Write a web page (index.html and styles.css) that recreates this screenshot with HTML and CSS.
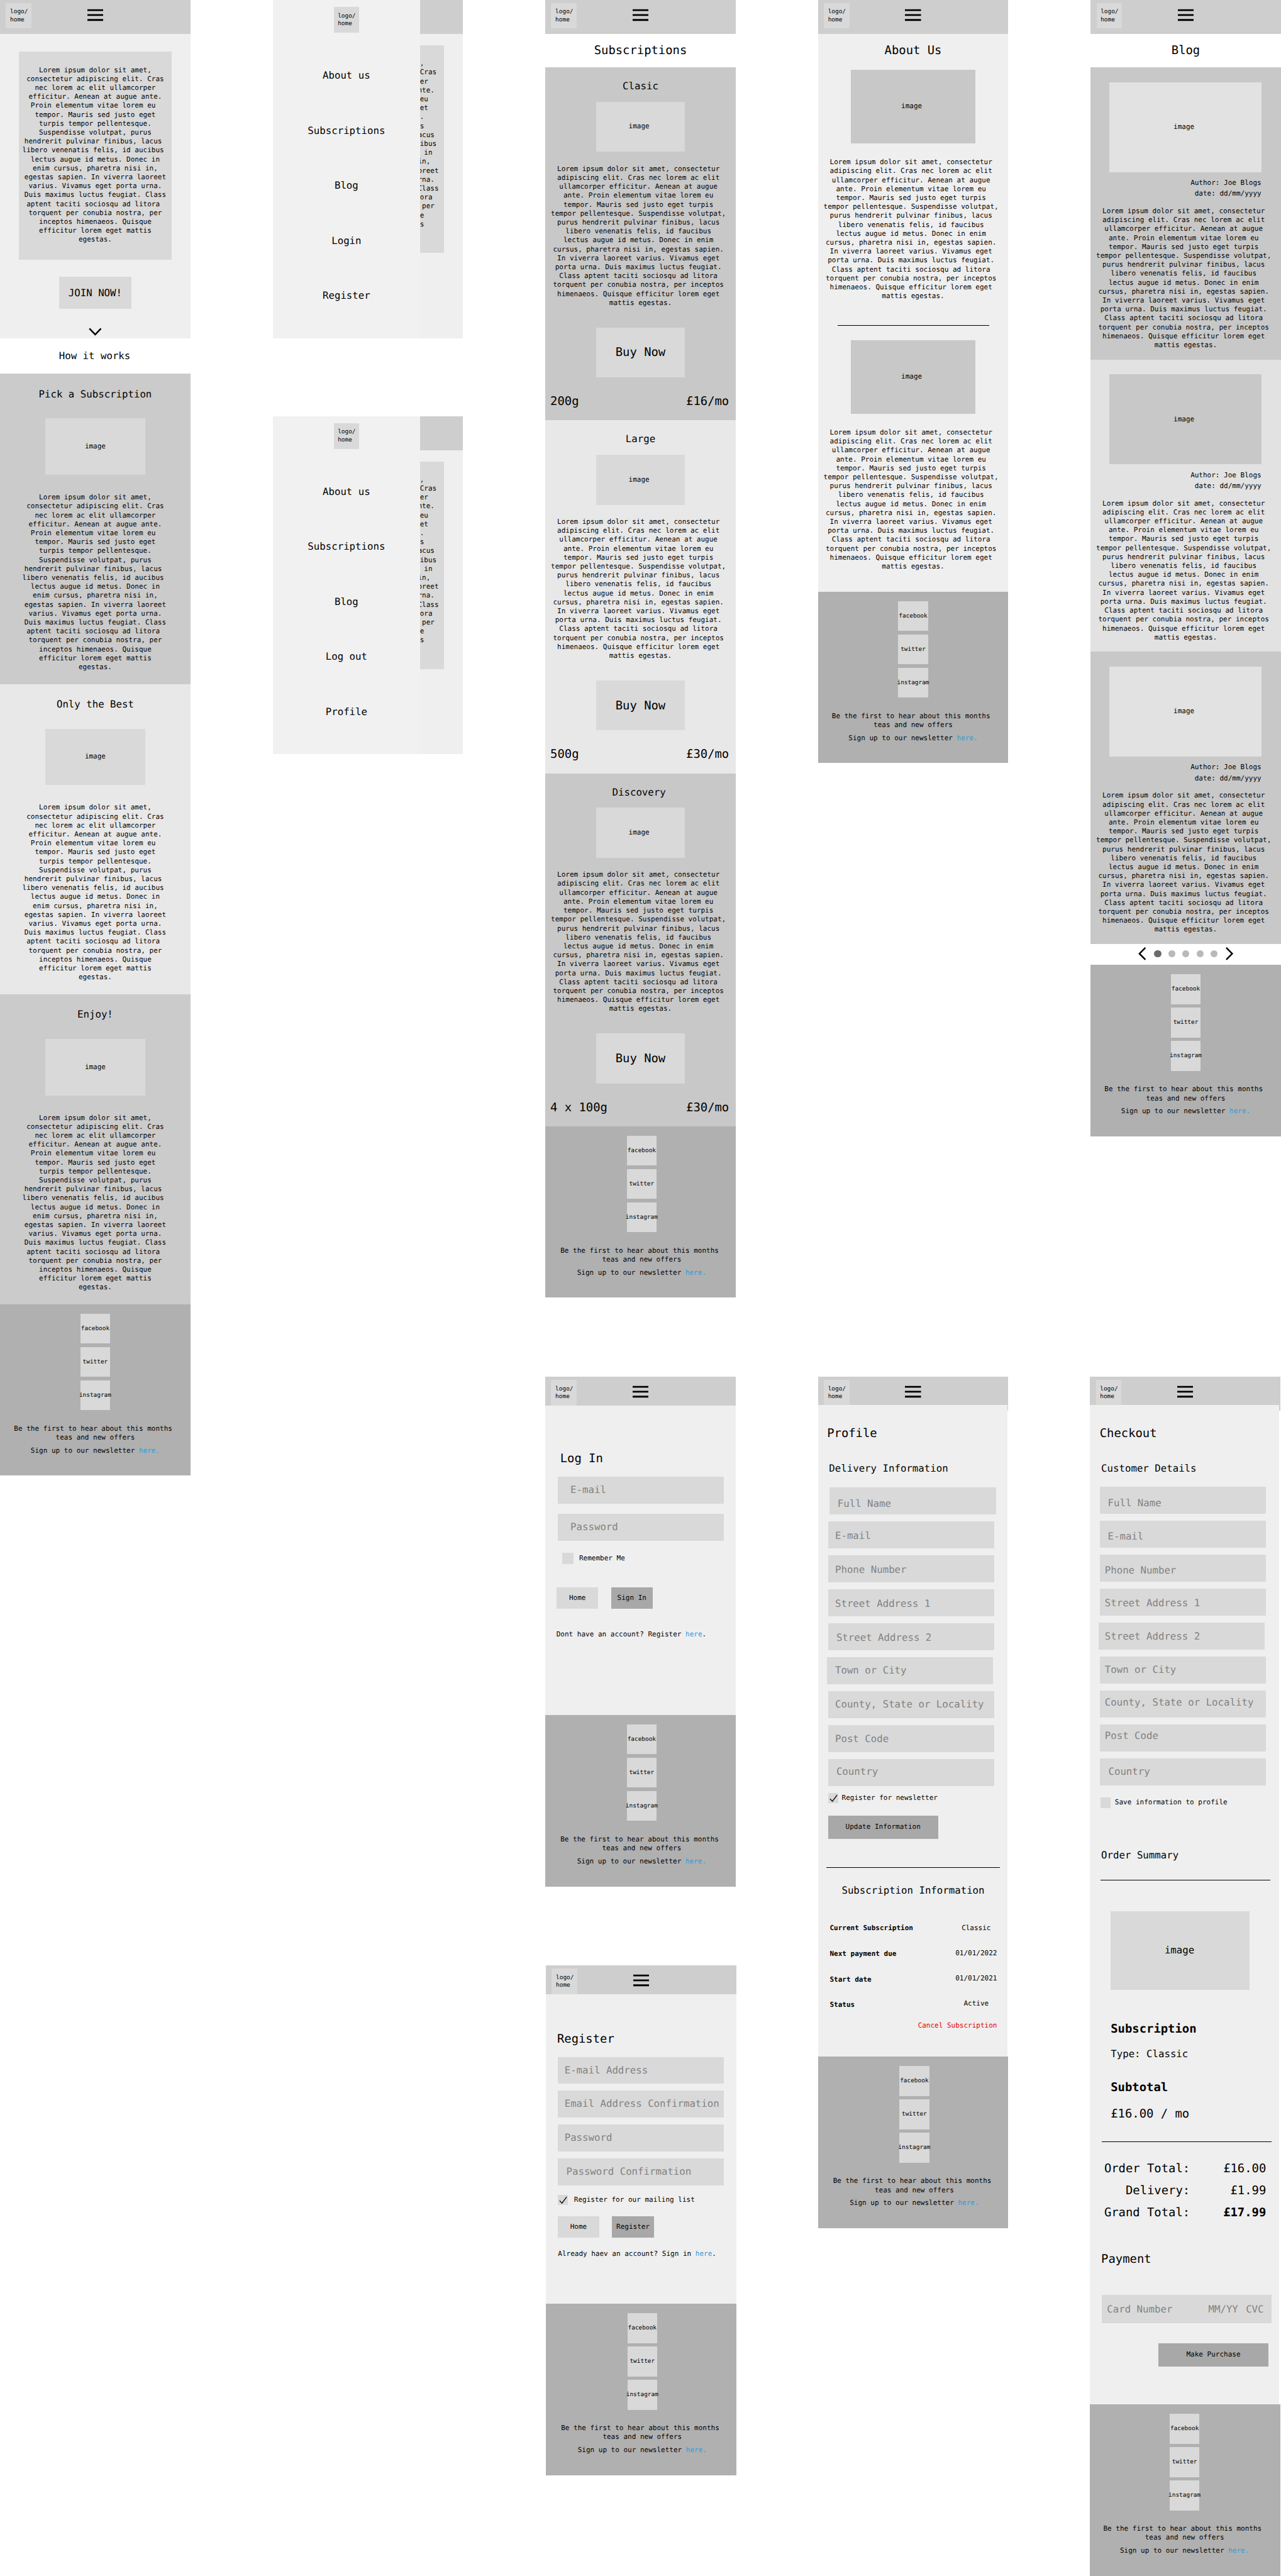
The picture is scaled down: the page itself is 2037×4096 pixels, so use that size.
FILE: index.html
```
<!DOCTYPE html>
<html lang="en">
<head>
<meta charset="utf-8">
<title>Tea subscription wireframes</title>
<link rel="stylesheet" href="styles.css">
</head>
<body>
<main class="board">

  <div class="column">
    <article class="screen">
      <header class="topbar">
        <div class="logo">logo/<br>home</div>
        <svg class="burger" viewBox="0 0 27 21"><path d="M0 2.3H27M0 10.5H27M0 18.8H27"/></svg>
      </header>
      <section class="hero">
        <div class="hero-box"><p class="copy">Lorem ipsum dolor sit amet,
consectetur adipiscing elit. Cras
nec lorem ac elit ullamcorper
efficitur. Aenean at augue ante.
Proin elementum vitae lorem eu 
tempor. Mauris sed justo eget
turpis tempor pellentesque.
Suspendisse volutpat, purus
hendrerit pulvinar finibus, lacus 
libero venenatis felis, id aucibus 
lectus augue id metus. Donec in
enim cursus, pharetra nisi in,
egestas sapien. In viverra laoreet
varius. Vivamus eget porta urna.
Duis maximus luctus feugiat. Class
aptent taciti sociosqu ad litora 
torquent per conubia nostra, per
inceptos himenaeos. Quisque
efficitur lorem eget mattis
egestas.</p></div>
        <div class="join">JOIN NOW!</div>
        <svg class="chevron" viewBox="0 0 22 14"><path d="M1.3 1.5L11 11.6L20.7 1.5"/></svg>
      </section>
      <h2 class="how">How it works</h2>
      <section class="feature dark">
        <h3 class="heading">Pick a Subscription</h3>
        <div class="image">image</div>
        <p class="copy">Lorem ipsum dolor sit amet,
consectetur adipiscing elit. Cras
nec lorem ac elit ullamcorper
efficitur. Aenean at augue ante.
Proin elementum vitae lorem eu 
tempor. Mauris sed justo eget
turpis tempor pellentesque.
Suspendisse volutpat, purus
hendrerit pulvinar finibus, lacus 
libero venenatis felis, id aucibus 
lectus augue id metus. Donec in
enim cursus, pharetra nisi in,
egestas sapien. In viverra laoreet
varius. Vivamus eget porta urna.
Duis maximus luctus feugiat. Class
aptent taciti sociosqu ad litora 
torquent per conubia nostra, per
inceptos himenaeos. Quisque
efficitur lorem eget mattis
egestas.</p>
      </section>
      <section class="feature">
        <h3 class="heading">Only the Best</h3>
        <div class="image">image</div>
        <p class="copy">Lorem ipsum dolor sit amet,
consectetur adipiscing elit. Cras
nec lorem ac elit ullamcorper
efficitur. Aenean at augue ante.
Proin elementum vitae lorem eu 
tempor. Mauris sed justo eget
turpis tempor pellentesque.
Suspendisse volutpat, purus
hendrerit pulvinar finibus, lacus 
libero venenatis felis, id aucibus 
lectus augue id metus. Donec in
enim cursus, pharetra nisi in,
egestas sapien. In viverra laoreet
varius. Vivamus eget porta urna.
Duis maximus luctus feugiat. Class
aptent taciti sociosqu ad litora 
torquent per conubia nostra, per
inceptos himenaeos. Quisque
efficitur lorem eget mattis
egestas.</p>
      </section>
      <section class="feature dark">
        <h3 class="heading">Enjoy!</h3>
        <div class="image">image</div>
        <p class="copy">Lorem ipsum dolor sit amet,
consectetur adipiscing elit. Cras
nec lorem ac elit ullamcorper
efficitur. Aenean at augue ante.
Proin elementum vitae lorem eu 
tempor. Mauris sed justo eget
turpis tempor pellentesque.
Suspendisse volutpat, purus
hendrerit pulvinar finibus, lacus 
libero venenatis felis, id aucibus 
lectus augue id metus. Donec in
enim cursus, pharetra nisi in,
egestas sapien. In viverra laoreet
varius. Vivamus eget porta urna.
Duis maximus luctus feugiat. Class
aptent taciti sociosqu ad litora 
torquent per conubia nostra, per
inceptos himenaeos. Quisque
efficitur lorem eget mattis
egestas.</p>
      </section>
      <footer class="footer">
        <div class="social">facebook</div>
        <div class="social">twitter</div>
        <div class="social">instagram</div>
        <p class="pitch">Be the first to hear about this months 
teas and new offers</p>
        <p class="signup">Sign up to our newsletter <a>here.</a></p>
      </footer>
    </article>
  </div>

  <div class="column">
    <article class="screen menu-screen">
      <header class="topbar"></header>
      <section class="hero">
        <div class="hero-box"><p class="copy">Lorem ipsum dolor sit amet,
consectetur adipiscing elit. Cras
nec lorem ac elit ullamcorper
efficitur. Aenean at augue ante.
Proin elementum vitae lorem eu 
tempor. Mauris sed justo eget
turpis tempor pellentesque.
Suspendisse volutpat, purus
hendrerit pulvinar finibus, lacus 
libero venenatis felis, id aucibus 
lectus augue id metus. Donec in
enim cursus, pharetra nisi in,
egestas sapien. In viverra laoreet
varius. Vivamus eget porta urna.
Duis maximus luctus feugiat. Class
aptent taciti sociosqu ad litora 
torquent per conubia nostra, per
inceptos himenaeos. Quisque
efficitur lorem eget mattis
egestas.</p></div>
      </section>
      <nav class="drawer">
        <div class="logo">logo/<br>home</div>
        <ul class="menu">
          <li>About us</li>
          <li>Subscriptions</li>
          <li>Blog</li>
          <li>Login</li>
          <li>Register</li>
        </ul>
      </nav>
    </article>
    <article class="screen menu-screen signed-in">
      <header class="topbar"></header>
      <section class="hero">
        <div class="hero-box"><p class="copy">Lorem ipsum dolor sit amet,
consectetur adipiscing elit. Cras
nec lorem ac elit ullamcorper
efficitur. Aenean at augue ante.
Proin elementum vitae lorem eu 
tempor. Mauris sed justo eget
turpis tempor pellentesque.
Suspendisse volutpat, purus
hendrerit pulvinar finibus, lacus 
libero venenatis felis, id aucibus 
lectus augue id metus. Donec in
enim cursus, pharetra nisi in,
egestas sapien. In viverra laoreet
varius. Vivamus eget porta urna.
Duis maximus luctus feugiat. Class
aptent taciti sociosqu ad litora 
torquent per conubia nostra, per
inceptos himenaeos. Quisque
efficitur lorem eget mattis
egestas.</p></div>
      </section>
      <nav class="drawer">
        <div class="logo">logo/<br>home</div>
        <ul class="menu">
          <li>About us</li>
          <li>Subscriptions</li>
          <li>Blog</li>
          <li>Log out</li>
          <li>Profile</li>
        </ul>
      </nav>
    </article>
  </div>

  <div class="column">
    <article class="screen">
      <header class="topbar">
        <div class="logo">logo/<br>home</div>
        <svg class="burger" viewBox="0 0 27 21"><path d="M0 2.3H27M0 10.5H27M0 18.8H27"/></svg>
      </header>
      <h1 class="page-title">Subscriptions</h1>
      <section class="plan dark">
        <h3 class="heading">Clasic</h3>
        <div class="image">image</div>
        <p class="copy">Lorem ipsum dolor sit amet, consectetur 
adipiscing elit. Cras nec lorem ac elit 
ullamcorper efficitur. Aenean at augue 
ante. Proin elementum vitae lorem eu 
tempor. Mauris sed justo eget turpis 
tempor pellentesque. Suspendisse volutpat, 
purus hendrerit pulvinar finibus, lacus 
libero venenatis felis, id faucibus 
lectus augue id metus. Donec in enim 
cursus, pharetra nisi in, egestas sapien. 
In viverra laoreet varius. Vivamus eget 
porta urna. Duis maximus luctus feugiat. 
Class aptent taciti sociosqu ad litora 
torquent per conubia nostra, per inceptos 
himenaeos. Quisque efficitur lorem eget 
mattis egestas.</p>
        <div class="buy">Buy Now</div>
        <div class="price"><span>200g</span><span>£16/mo</span></div>
      </section>
      <section class="plan">
        <h3 class="heading">Large</h3>
        <div class="image">image</div>
        <p class="copy">Lorem ipsum dolor sit amet, consectetur 
adipiscing elit. Cras nec lorem ac elit 
ullamcorper efficitur. Aenean at augue 
ante. Proin elementum vitae lorem eu 
tempor. Mauris sed justo eget turpis 
tempor pellentesque. Suspendisse volutpat, 
purus hendrerit pulvinar finibus, lacus 
libero venenatis felis, id faucibus 
lectus augue id metus. Donec in enim 
cursus, pharetra nisi in, egestas sapien. 
In viverra laoreet varius. Vivamus eget 
porta urna. Duis maximus luctus feugiat. 
Class aptent taciti sociosqu ad litora 
torquent per conubia nostra, per inceptos 
himenaeos. Quisque efficitur lorem eget 
mattis egestas.</p>
        <div class="buy">Buy Now</div>
        <div class="price"><span>500g</span><span>£30/mo</span></div>
      </section>
      <section class="plan dark discovery">
        <h3 class="heading">Discovery</h3>
        <div class="image">image</div>
        <p class="copy">Lorem ipsum dolor sit amet, consectetur 
adipiscing elit. Cras nec lorem ac elit 
ullamcorper efficitur. Aenean at augue 
ante. Proin elementum vitae lorem eu 
tempor. Mauris sed justo eget turpis 
tempor pellentesque. Suspendisse volutpat, 
purus hendrerit pulvinar finibus, lacus 
libero venenatis felis, id faucibus 
lectus augue id metus. Donec in enim 
cursus, pharetra nisi in, egestas sapien. 
In viverra laoreet varius. Vivamus eget 
porta urna. Duis maximus luctus feugiat. 
Class aptent taciti sociosqu ad litora 
torquent per conubia nostra, per inceptos 
himenaeos. Quisque efficitur lorem eget 
mattis egestas.</p>
        <div class="buy">Buy Now</div>
        <div class="price"><span>4 x 100g</span><span>£30/mo</span></div>
      </section>
      <footer class="footer nudged">
        <div class="social">facebook</div>
        <div class="social">twitter</div>
        <div class="social">instagram</div>
        <p class="pitch">Be the first to hear about this months 
teas and new offers</p>
        <p class="signup">Sign up to our newsletter <a>here.</a></p>
      </footer>
    </article>

    <article class="screen login">
      <header class="topbar">
        <div class="logo">logo/<br>home</div>
        <svg class="burger" viewBox="0 0 27 21"><path d="M0 2.3H27M0 10.5H27M0 18.8H27"/></svg>
      </header>
      <section class="panel">
        <h1 class="form-title">Log In</h1>
        <div class="fields">
          <div class="field">E-mail</div>
          <div class="field">Password</div>
        </div>
        <div class="check-row"><span class="box"></span>Remember Me</div>
        <div class="buttons"><span class="button">Home</span><span class="button primary">Sign In</span></div>
        <p class="note">Dont have an account? Register <a>here</a>.</p>
      </section>
      <footer class="footer nudged">
        <div class="social">facebook</div>
        <div class="social">twitter</div>
        <div class="social">instagram</div>
        <p class="pitch">Be the first to hear about this months 
teas and new offers</p>
        <p class="signup">Sign up to our newsletter <a>here.</a></p>
      </footer>
    </article>

    <article class="screen register">
      <header class="topbar">
        <div class="logo">logo/<br>home</div>
        <svg class="burger" viewBox="0 0 27 21"><path d="M0 2.3H27M0 10.5H27M0 18.8H27"/></svg>
      </header>
      <section class="panel">
        <h1 class="form-title">Register</h1>
        <div class="fields">
          <div class="field">E-mail Address</div>
          <div class="field">Email Address Confirmation</div>
          <div class="field">Password</div>
          <div class="field inset">Password Confirmation</div>
        </div>
        <div class="check-row"><span class="box"><svg viewBox="0 0 17 17"><path d="M3 9.6L7 14L15 3.2"/></svg></span>Register for our mailing list</div>
        <div class="buttons"><span class="button">Home</span><span class="button primary">Register</span></div>
        <p class="note">Already haev an account? Sign in <a>here</a>.</p>
      </section>
      <footer class="footer nudged">
        <div class="social">facebook</div>
        <div class="social">twitter</div>
        <div class="social">instagram</div>
        <p class="pitch">Be the first to hear about this months 
teas and new offers</p>
        <p class="signup">Sign up to our newsletter <a>here.</a></p>
      </footer>
    </article>
  </div>

  <div class="column">
    <article class="screen">
      <header class="topbar">
        <div class="logo">logo/<br>home</div>
        <svg class="burger" viewBox="0 0 27 21"><path d="M0 2.3H27M0 10.5H27M0 18.8H27"/></svg>
      </header>
      <section class="about">
        <h1 class="page-title">About Us</h1>
        <div class="image">image</div>
        <p class="copy">Lorem ipsum dolor sit amet, consectetur 
adipiscing elit. Cras nec lorem ac elit 
ullamcorper efficitur. Aenean at augue 
ante. Proin elementum vitae lorem eu 
tempor. Mauris sed justo eget turpis 
tempor pellentesque. Suspendisse volutpat, 
purus hendrerit pulvinar finibus, lacus 
libero venenatis felis, id faucibus 
lectus augue id metus. Donec in enim 
cursus, pharetra nisi in, egestas sapien. 
In viverra laoreet varius. Vivamus eget 
porta urna. Duis maximus luctus feugiat. 
Class aptent taciti sociosqu ad litora 
torquent per conubia nostra, per inceptos 
himenaeos. Quisque efficitur lorem eget 
mattis egestas.</p>
        <hr class="rule">
        <div class="image">image</div>
        <p class="copy">Lorem ipsum dolor sit amet, consectetur 
adipiscing elit. Cras nec lorem ac elit 
ullamcorper efficitur. Aenean at augue 
ante. Proin elementum vitae lorem eu 
tempor. Mauris sed justo eget turpis 
tempor pellentesque. Suspendisse volutpat, 
purus hendrerit pulvinar finibus, lacus 
libero venenatis felis, id faucibus 
lectus augue id metus. Donec in enim 
cursus, pharetra nisi in, egestas sapien. 
In viverra laoreet varius. Vivamus eget 
porta urna. Duis maximus luctus feugiat. 
Class aptent taciti sociosqu ad litora 
torquent per conubia nostra, per inceptos 
himenaeos. Quisque efficitur lorem eget 
mattis egestas.</p>
      </section>
      <footer class="footer">
        <div class="social">facebook</div>
        <div class="social">twitter</div>
        <div class="social">instagram</div>
        <p class="pitch">Be the first to hear about this months 
teas and new offers</p>
        <p class="signup">Sign up to our newsletter <a>here.</a></p>
      </footer>
    </article>

    <article class="screen profile">
      <header class="topbar">
        <div class="logo">logo/<br>home</div>
        <svg class="burger" viewBox="0 0 27 21"><path d="M0 2.3H27M0 10.5H27M0 18.8H27"/></svg>
      </header>
      <section class="panel">
        <h1 class="form-title">Profile</h1>
        <h2 class="sub-title">Delivery Information</h2>
        <div class="fields">
          <div class="field">Full Name</div>
          <div class="field">E-mail</div>
          <div class="field">Phone Number</div>
          <div class="field">Street Address 1</div>
          <div class="field">Street Address 2</div>
          <div class="field">Town or City</div>
          <div class="field">County, State or Locality</div>
          <div class="field">Post Code</div>
          <div class="field">Country</div>
        </div>
        <div class="check-row"><span class="box"><svg viewBox="0 0 17 17"><path d="M3 9.6L7 14L15 3.2"/></svg></span>Register for newsletter</div>
        <div class="wide-button">Update Information</div>
        <hr class="rule">
        <h2 class="info-title">Subscription Information</h2>
        <div class="info">
          <ul class="info-labels">
            <li>Current Subscription</li>
            <li>Next payment due</li>
            <li>Start date</li>
            <li>Status</li>
          </ul>
          <ul class="info-values">
            <li>Classic</li>
            <li>01/01/2022</li>
            <li>01/01/2021</li>
            <li>Active</li>
          </ul>
        </div>
        <p class="cancel">Cancel Subscription</p>
      </section>
      <footer class="footer nudged">
        <div class="social">facebook</div>
        <div class="social">twitter</div>
        <div class="social">instagram</div>
        <p class="pitch">Be the first to hear about this months 
teas and new offers</p>
        <p class="signup">Sign up to our newsletter <a>here.</a></p>
      </footer>
    </article>
  </div>

  <div class="column">
    <article class="screen">
      <header class="topbar">
        <div class="logo">logo/<br>home</div>
        <svg class="burger" viewBox="0 0 27 21"><path d="M0 2.3H27M0 10.5H27M0 18.8H27"/></svg>
      </header>
      <h1 class="page-title">Blog</h1>
      <section class="post">
        <div class="image">image</div>
        <p class="meta">Author: Joe Blogs<br>date: dd/mm/yyyy</p>
        <p class="copy">Lorem ipsum dolor sit amet, consectetur 
adipiscing elit. Cras nec lorem ac elit 
ullamcorper efficitur. Aenean at augue 
ante. Proin elementum vitae lorem eu 
tempor. Mauris sed justo eget turpis 
tempor pellentesque. Suspendisse volutpat, 
purus hendrerit pulvinar finibus, lacus 
libero venenatis felis, id faucibus 
lectus augue id metus. Donec in enim 
cursus, pharetra nisi in, egestas sapien. 
In viverra laoreet varius. Vivamus eget 
porta urna. Duis maximus luctus feugiat. 
Class aptent taciti sociosqu ad litora 
torquent per conubia nostra, per inceptos 
himenaeos. Quisque efficitur lorem eget 
mattis egestas.</p>
      </section>
      <section class="post light">
        <div class="image">image</div>
        <p class="meta">Author: Joe Blogs<br>date: dd/mm/yyyy</p>
        <p class="copy">Lorem ipsum dolor sit amet, consectetur 
adipiscing elit. Cras nec lorem ac elit 
ullamcorper efficitur. Aenean at augue 
ante. Proin elementum vitae lorem eu 
tempor. Mauris sed justo eget turpis 
tempor pellentesque. Suspendisse volutpat, 
purus hendrerit pulvinar finibus, lacus 
libero venenatis felis, id faucibus 
lectus augue id metus. Donec in enim 
cursus, pharetra nisi in, egestas sapien. 
In viverra laoreet varius. Vivamus eget 
porta urna. Duis maximus luctus feugiat. 
Class aptent taciti sociosqu ad litora 
torquent per conubia nostra, per inceptos 
himenaeos. Quisque efficitur lorem eget 
mattis egestas.</p>
      </section>
      <section class="post">
        <div class="image">image</div>
        <p class="meta">Author: Joe Blogs<br>date: dd/mm/yyyy</p>
        <p class="copy">Lorem ipsum dolor sit amet, consectetur 
adipiscing elit. Cras nec lorem ac elit 
ullamcorper efficitur. Aenean at augue 
ante. Proin elementum vitae lorem eu 
tempor. Mauris sed justo eget turpis 
tempor pellentesque. Suspendisse volutpat, 
purus hendrerit pulvinar finibus, lacus 
libero venenatis felis, id faucibus 
lectus augue id metus. Donec in enim 
cursus, pharetra nisi in, egestas sapien. 
In viverra laoreet varius. Vivamus eget 
porta urna. Duis maximus luctus feugiat. 
Class aptent taciti sociosqu ad litora 
torquent per conubia nostra, per inceptos 
himenaeos. Quisque efficitur lorem eget 
mattis egestas.</p>
      </section>
      <nav class="pager">
        <svg class="arrow" viewBox="0 0 13 22"><path d="M12 1L2 11L12 21"/></svg>
        <div class="dots"><i class="dot current"></i><i class="dot"></i><i class="dot"></i><i class="dot"></i><i class="dot"></i></div>
        <svg class="arrow" viewBox="0 0 13 22"><path d="M1 1L11 11L1 21"/></svg>
      </nav>
      <footer class="footer">
        <div class="social">facebook</div>
        <div class="social">twitter</div>
        <div class="social">instagram</div>
        <p class="pitch">Be the first to hear about this months 
teas and new offers</p>
        <p class="signup">Sign up to our newsletter <a>here.</a></p>
      </footer>
    </article>

    <article class="screen checkout">
      <header class="topbar">
        <div class="logo">logo/<br>home</div>
        <svg class="burger" viewBox="0 0 27 21"><path d="M0 2.3H27M0 10.5H27M0 18.8H27"/></svg>
      </header>
      <section class="panel">
        <h1 class="form-title">Checkout</h1>
        <h2 class="sub-title">Customer Details</h2>
        <div class="fields">
          <div class="field">Full Name</div>
          <div class="field">E-mail</div>
          <div class="field">Phone Number</div>
          <div class="field">Street Address 1</div>
          <div class="field">Street Address 2</div>
          <div class="field">Town or City</div>
          <div class="field">County, State or Locality</div>
          <div class="field">Post Code</div>
          <div class="field">Country</div>
        </div>
        <div class="check-row"><span class="box"></span>Save information to profile</div>
        <h2 class="sub-title summary-title">Order Summary</h2>
        <hr class="rule">
        <div class="image">image</div>
        <h3 class="item-label">Subscription</h3>
        <p class="item-type">Type: Classic</p>
        <h3 class="item-label subtotal">Subtotal</h3>
        <p class="item-price">£16.00 / mo</p>
        <hr class="rule lower">
        <div class="totals">
          <span>Order Total:</span><span>£16.00</span>
          <span>Delivery:</span><span>£1.99</span>
          <span>Grand Total:</span><b>£17.99</b>
        </div>
        <h2 class="payment-title">Payment</h2>
        <div class="card"><span>Card Number</span><span>MM/YY</span><span>CVC</span></div>
        <div class="wide-button">Make Purchase</div>
      </section>
      <footer class="footer pulled">
        <div class="social">facebook</div>
        <div class="social">twitter</div>
        <div class="social">instagram</div>
        <p class="pitch">Be the first to hear about this months 
teas and new offers</p>
        <p class="signup">Sign up to our newsletter <a>here.</a></p>
      </footer>
    </article>
  </div>

</main>
</body>
</html>
```
FILE: styles.css
```
/* 1rem is ten wireframe units; every phone screen is 32rem wide. */
html {
  font-size: 9.4656px;
}

* {
  box-sizing: border-box;
  margin: 0;
  padding: 0;
}

body {
  background: #fff;
  color: #000;
  font-family: "DejaVu Sans Mono", "Liberation Mono", monospace;
  font-size: 1.163rem;
  line-height: 1.5rem;
  text-rendering: geometricPrecision;
  overflow: hidden;
}

h1, h2, h3 {
  font-weight: 400;
}

ul {
  list-style: none;
}

a {
  color: #2d9cdb;
}

svg {
  display: block;
  fill: none;
  stroke: #000;
}

.board {
  display: grid;
  grid-template-columns: repeat(5, 32rem);
  column-gap: 13.8rem;
  height: 432.7rem;
  align-items: start;
}

.column,
.screen,
.hero,
.feature,
.plan,
.about,
.post,
.panel,
.footer {
  display: flex;
  flex-direction: column;
}

.screen {
  width: 32rem;
}

.screen > *,
.screen section > *,
.footer > * {
  flex: none;
}

/* Shared pieces */

.topbar {
  display: flex;
  align-items: flex-start;
  height: 5.7rem;
  padding: 0.5rem 0 0 1rem;
  background: #cecece;
}

.logo {
  width: 4.3rem;
  height: 4.3rem;
  padding: 0.9rem 0 0 0.7rem;
  background: #d9d9d9;
  font-size: 0.997rem;
  line-height: 1.3rem;
}

.burger {
  width: 2.7rem;
  height: 2.1rem;
  margin: 0.95rem 0 0 9.35rem;
  stroke-width: 3;
}

.image,
.join,
.buy {
  display: flex;
  align-items: center;
  justify-content: center;
  align-self: center;
  background: #d9d9d9;
}

.copy {
  text-align: center;
  white-space: pre;
}

.heading {
  font-size: 1.661rem;
  line-height: 2rem;
  text-align: center;
}

.page-title {
  height: 5.6rem;
  font-size: 1.993rem;
  line-height: 5.7rem;
  text-align: center;
}

.rule {
  height: 1px;
  border: 0;
  background: #000;
}

.footer {
  align-items: center;
  height: 28.8rem;
  padding-top: 1.6rem;
  background: #b0b0b0;
}

.nudged {
  padding-left: 0.4rem;
}

.pulled {
  padding-right: 0.2rem;
}

.social {
  display: flex;
  align-items: center;
  justify-content: center;
  width: 5rem;
  height: 5rem;
  margin-bottom: 0.6rem;
  background: #d9d9d9;
  font-size: 0.997rem;
}

.pitch {
  margin-top: 1.8rem;
  text-align: center;
  white-space: pre;
}

.signup {
  margin-top: 0.65rem;
}

/* Home */

.hero {
  align-items: center;
  height: 51.1rem;
  background: #efefef;
}

.hero-box {
  width: 25.6rem;
  height: 34.9rem;
  margin-top: 3rem;
  padding-top: 2.35rem;
  background: #d9d9d9;
}

.join {
  width: 12.2rem;
  height: 5.4rem;
  margin-top: 2.9rem;
  font-size: 1.661rem;
}

.chevron {
  width: 2.2rem;
  height: 1.4rem;
  margin-top: 3.1rem;
  stroke-width: 2.6;
}

.how {
  height: 6rem;
  padding-right: 0.2rem;
  font-size: 1.661rem;
  line-height: 6rem;
  text-align: center;
}

.feature {
  height: 52.1rem;
  padding-top: 2.5rem;
  background: #e8e8e8;
}

.feature.dark {
  background: #cbcbcb;
}

.feature .image {
  width: 16.8rem;
  height: 9.5rem;
  margin: 3rem 0 3.05rem;
}

/* Menu drawer */

.menu-screen {
  position: relative;
  overflow: hidden;
}

.menu-screen .hero-box {
  margin-top: 1.9rem;
}

.signed-in {
  margin-top: 13.1rem;
}

.drawer {
  position: absolute;
  top: 0;
  left: 0;
  display: flex;
  flex-direction: column;
  align-items: center;
  width: 24.8rem;
  height: 100%;
  padding-top: 1.2rem;
  background: #f1f1f1;
}

.menu {
  margin-top: 2.55rem;
  font-size: 1.661rem;
  line-height: 9.25rem;
  text-align: center;
}

/* Subscriptions */

.plan {
  height: 59.3rem;
  padding-top: 2.23rem;
  background: #e8e8e8;
}

.plan.dark {
  background: #c8c8c8;
}

.plan .image,
.plan .buy {
  width: 14.8rem;
  height: 8.4rem;
}

.plan .image {
  margin: 1.57rem 0 2.15rem;
  padding-right: 0.5rem;
}

.plan .buy {
  margin-top: 3.35rem;
  font-size: 1.993rem;
}

.discovery .heading {
  padding-right: 0.5rem;
}

.price {
  display: flex;
  justify-content: space-between;
  margin-top: 2.85rem;
  padding: 0 1.13rem 0 0.85rem;
  font-size: 1.993rem;
  line-height: 2.4rem;
}

/* About */

.about {
  height: 93.7rem;
  background: #efefef;
}

.about .image {
  width: 21rem;
  height: 12.4rem;
  margin: 0.4rem 0 2.43rem;
  padding-right: 0.5rem;
  background: #c8c8c8;
}

.about .rule {
  width: 25.5rem;
  margin: 4.07rem 0 2rem 3.3rem;
}

/* Blog */

.post {
  height: 49.1rem;
  padding-top: 2.5rem;
  background: #c8c8c8;
}

.post .image {
  width: 25.5rem;
  height: 15.1rem;
  align-self: flex-start;
  margin-left: 3.2rem;
  padding-right: 0.5rem;
  background: #e2e2e2;
}

.post.light {
  background: #e2e2e2;
}

.post.light .image {
  background: #c8c8c8;
}

.meta {
  margin: 0.88rem 3.3rem 1.27rem 0;
  line-height: 1.85rem;
  text-align: right;
}

.pager {
  display: flex;
  align-items: center;
  height: 3.5rem;
  padding: 0 0 0.25rem 8rem;
}

.arrow {
  width: 1.3rem;
  height: 2.2rem;
  stroke-width: 2.6;
}

.dots {
  display: flex;
  gap: 1.17rem;
  margin: 0 1.3rem 0 1.4rem;
}

.dot {
  width: 1.2rem;
  height: 1.2rem;
  border-radius: 50%;
  background: #b9b9b9;
}

.dot.current {
  background: #6b6b6b;
}

/* Forms */

.panel {
  margin-top: -0.9rem;
  height: 52rem;
  background: #efefef;
}

.form-title {
  font-size: 1.993rem;
  line-height: 2.4rem;
}

.sub-title {
  font-size: 1.661rem;
  line-height: 2rem;
}

.fields {
  display: flex;
  flex-direction: column;
  gap: 1.2rem;
}

.field {
  --dy: 0rem;
  width: 27.9rem;
  height: 4.5rem;
  background: #d9d9d9;
  color: #828282;
  font-size: 1.661rem;
  line-height: calc(4.5rem + 2 * var(--dy));
  white-space: nowrap;
}

.check-row {
  display: flex;
  align-items: center;
}

.box {
  width: 1.7rem;
  height: 1.7rem;
  background: #d9d9d9;
}

.box svg {
  width: 1.7rem;
  height: 1.7rem;
  stroke-width: 1.4;
}

.buttons {
  display: flex;
  gap: 2.2rem;
}

.button {
  width: 6.9rem;
  height: 3.6rem;
  background: #d9d9d9;
  line-height: 3.6rem;
  text-align: center;
}

.button.primary {
  width: 7rem;
  background: #a8a8a8;
}

.wide-button {
  width: 18.5rem;
  height: 3.9rem;
  background: #a8a8a8;
  line-height: 3.9rem;
  text-align: center;
}

/* Log in */

.login,
.register {
  margin-top: 13.3rem;
}

.login .form-title {
  margin: 7.74rem 0 0 2.5rem;
}

.login .fields {
  gap: 1.7rem;
  margin: 1.86rem 0 0 2.15rem;
}

.login .field {
  padding-left: 2.08rem;
}

.login .check-row {
  gap: 0.9rem;
  margin: 2.1rem 0 0 2.9rem;
}

.login .box {
  width: 1.9rem;
  height: 1.9rem;
}

.login .buttons {
  margin: 3.9rem 0 0 1.95rem;
}

.login .note {
  margin: 3.55rem 0 0 1.87rem;
}

/* Register */

.register {
  margin-left: 0.1rem;
}

.register .form-title {
  margin: 6.3rem 0 0 1.9rem;
}

.register .fields {
  margin: 1.83rem 0 0 2.04rem;
}

.register .field {
  padding-left: 1.1rem;
}

.register .field.inset {
  padding-left: 1.4rem;
}

.register .check-row {
  gap: 1rem;
  margin: 1.6rem 0 0 2.04rem;
}

.register .buttons {
  margin: 1.9rem 0 0 2.04rem;
}

.register .note {
  margin: 2.03rem 0 0 2.04rem;
}

/* Profile and checkout forms */

.profile .panel,
.checkout .panel {
  width: 31.8rem;
  margin-top: -1rem;
}

.profile {
  margin-top: 103.1rem;
}

.profile .panel {
  height: 109.5rem;
}

.profile .form-title {
  margin: 3.64rem 0 0 1.55rem;
}

.profile .sub-title {
  margin: 3.66rem 0 0 1.88rem;
}

.profile .fields {
  margin: 2.2rem 0 0 1.7rem;
}

.profile .field {
  --dy: 0.15rem;
  padding-left: 1.2rem;
}

.profile .field:nth-child(1) {
  --dy: 0.45rem;
  margin-left: 0.3rem;
  padding-left: 1.3rem;
}

.profile .field:nth-child(5) {
  padding-left: 1.4rem;
}

.profile .field:nth-child(6) {
  --dy: 0rem;
  margin-left: -0.2rem;
  padding-left: 1.4rem;
}

.profile .field:nth-child(7) {
  --dy: -0.05rem;
}

.profile .field:nth-child(8) {
  --dy: 0.05rem;
}

.profile .field:nth-child(9) {
  --dy: -0.1rem;
  padding-left: 1.4rem;
}

.profile .check-row {
  gap: 0.62rem;
  margin: 1.2rem 0 0 1.7rem;
}

.profile .wide-button {
  margin: 2.1rem 0 0 1.7rem;
}

.profile .rule {
  width: 29.2rem;
  margin: 4.8rem 0 0 1.4rem;
}

.info-title {
  width: 32rem;
  margin-top: 2.8rem;
  font-size: 1.661rem;
  line-height: 2rem;
  text-align: center;
}

.info {
  display: flex;
  align-items: flex-start;
  margin-top: 3.25rem;
}

.info-labels {
  width: 20rem;
  margin-left: 2rem;
  font-weight: 700;
  line-height: 4.3rem;
}

.info-values {
  width: 9.2rem;
  line-height: 4.21rem;
  text-align: center;
}

.cancel {
  margin: 0.5rem 1.7rem 0 0;
  color: #eb0000;
  text-align: right;
}

/* Checkout */

.checkout {
  margin: 40.4rem 0 0 -0.1rem;
}

.checkout .panel {
  height: 167.9rem;
}

.checkout .form-title {
  margin: 3.64rem 0 0 1.65rem;
}

.checkout .sub-title {
  margin: 3.66rem 0 0 1.9rem;
}

.checkout .fields {
  margin: 2.1rem 0 0 1.7rem;
}

.checkout .field {
  padding-left: 0.8rem;
}

.checkout .field:nth-child(1) {
  --dy: 0.45rem;
  padding-left: 1.3rem;
}

.checkout .field:nth-child(2) {
  --dy: 0.37rem;
  padding-left: 1.3rem;
}

.checkout .field:nth-child(3) {
  --dy: 0.35rem;
}

.checkout .field:nth-child(4) {
  --dy: 0.14rem;
}

.checkout .field:nth-child(5) {
  --dy: 0.05rem;
  margin-left: -0.2rem;
  padding-left: 1rem;
}

.checkout .field:nth-child(6) {
  --dy: -0.05rem;
}

.checkout .field:nth-child(7) {
  --dy: -0.25rem;
}

.checkout .field:nth-child(8) {
  --dy: -0.35rem;
}

.checkout .field:nth-child(9) {
  --dy: -0.05rem;
  padding-left: 1.4rem;
}

.checkout .check-row {
  gap: 0.7rem;
  margin: 2.1rem 0 0 1.8rem;
}

.checkout .summary-title {
  margin-top: 7rem;
}

.checkout .rule {
  width: 28.5rem;
  margin: 3.1rem 0 0 1.8rem;
}

.checkout .image {
  align-self: flex-start;
  width: 23.3rem;
  height: 13.2rem;
  margin: 5.15rem 0 0 3.5rem;
  padding-right: 0.2rem;
  font-size: 1.661rem;
}

.item-label,
.item-price,
.payment-title {
  font-size: 1.993rem;
  line-height: 2.4rem;
}

.item-label {
  margin: 5.44rem 0 0 3.5rem;
  font-weight: 700;
}

.item-type {
  margin: 2.07rem 0 0 3.5rem;
  font-size: 1.661rem;
  line-height: 2rem;
}

.item-label.subtotal {
  margin-top: 3.34rem;
}

.item-price {
  margin: 2.08rem 0 0 3.5rem;
}

.checkout .rule.lower {
  margin: 3.32rem 0 0 2rem;
}

.totals {
  display: grid;
  grid-template-columns: 16.8rem 12.8rem;
  margin-top: 2.65rem;
  font-size: 1.993rem;
  line-height: 3.74rem;
  text-align: right;
}

.payment-title {
  margin: 4.61rem 0 0 1.9rem;
}

.card {
  display: flex;
  width: 28.5rem;
  height: 4.75rem;
  margin: 4.82rem 0 0 2rem;
  padding: 0 1.3rem 0 0.87rem;
  gap: 1.3rem;
  background: #d9d9d9;
  color: #828282;
  font-size: 1.661rem;
  line-height: 4.9rem;
}

.card span:first-child {
  flex: 1;
}

.checkout .wide-button {
  margin: 3.45rem 0 0 11.5rem;
}
```
